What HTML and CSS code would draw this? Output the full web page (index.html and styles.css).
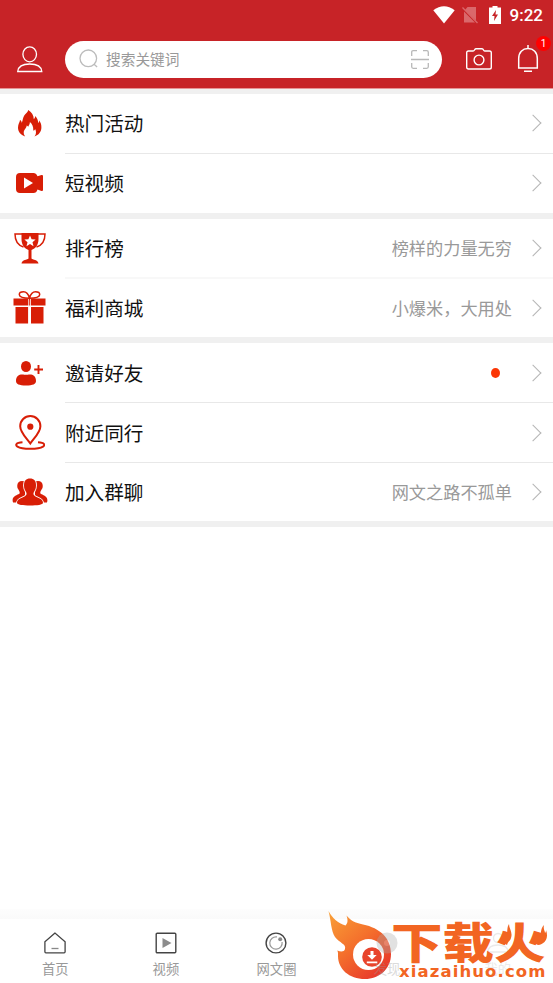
FILE: index.html
```html
<!DOCTYPE html>
<html lang="zh-CN">
<head>
<meta charset="utf-8">
<title>发现</title>
<link rel="stylesheet" href="styles.css">
</head>
<body>
<div class="app">
  <header class="header">
    <div class="status">
      <svg class="wifi" width="22" height="18" viewBox="0 0 22 18"><path d="M.3 4.200Q11-3.800 21.700 4.200L11 17.500z" fill="#fff"/></svg>
      <svg class="sim" width="16" height="18" viewBox="0 0 16 18"><path d="M5.500 1H14v13.500L3 4zM2 5.500 13 16.500H2z" fill="#da686b"/><path d="M.5 1.500 15.500 17" stroke="#da686b" stroke-width="1.300"/></svg>
      <svg class="battery" width="12" height="18" viewBox="0 0 12 18"><path d="M3.500 0h5v1.600H12V18H0V1.600h3.500z" fill="#fff"/><path d="M7 4 3 10h2.500L5 15l4-6.500H6.500z" fill="#c72327"/></svg>
      <span class="clock">9:22</span>
    </div>
    <div class="toolbar">
      <svg class="profile" width="26" height="27" viewBox="0 0 26 27" fill="none" stroke="#fff" stroke-width="1.300"><ellipse cx="12.700" cy="8.300" rx="6.800" ry="7.500"/><path d="M.7 25.500C1.200 21 5 18 12.700 18s11.700 3 12.100 7.500z"/></svg>
      <div class="search">
        <svg width="20" height="20" viewBox="0 0 20 20" fill="none" stroke="#bcbcbc" stroke-width="1.300"><circle cx="9.300" cy="9.300" r="8.300"/><path d="m14.800 15 3.300 3"/></svg>
        <span class="placeholder">搜索关键词</span>
        <svg width="18" height="19" viewBox="0 0 18 19" fill="none" stroke="#b8b8b8" stroke-width="1.300"><path d="M.7 6V2.200Q.7.700 2.200.7H6M12 .7h3.800q1.500 0 1.500 1.500V6M.7 13v3.800q0 1.500 1.500 1.500H6M12 18.300h3.800q1.500 0 1.500-1.500V13M0 9.500h18"/></svg>
      </div>
      <svg class="camera" width="26" height="22" viewBox="0 0 26 22" fill="none" stroke="#fff" stroke-width="1.400"><path d="M2.500 3H7q1 0 1.500-1T10 .8h6q1 0 1.500 1.200T19 3h4.500q1.800 0 1.800 1.800v14.400q0 1.800-1.800 1.800h-21Q.7 21 .7 19.200V4.800Q.7 3 2.500 3z"/><circle cx="13" cy="12" r="4.900"/></svg>
      <div class="notice">
        <svg width="22" height="28" viewBox="0 0 22 28" fill="none" stroke="#fff" stroke-width="1.500"><path d="M11 0v4M1.700 23V13.500C1.700 7.300 5.500 3.600 11 3.600s9.300 3.700 9.300 9.900V23zM7 26.300h8"/></svg>
        <span class="badge">1</span>
      </div>
    </div>
  </header>

  <main class="groups">
    <section class="group raised">
      <div class="row">
        <div class="icon"><svg width="24" height="27" viewBox="0 0 24 27"><path d="M7.200 26.500C2.500 25 0 21.500 0 17.500c0-3.300 1.800-5.200 2-7.500 1.200.8 1.700 1.700 1.800 2.900C5 9.800 4.600 8 6.400 5.300 7.700 3.300 10 2.500 10.200 0c3.300 2.200 5.500 5 5.600 9.200 1-.9 1.400-1.800 1.200-3.200 2.300 1.700 3 4.500 3.300 7 .8-.7 1-1.500.9-2.700 1.400 2.200 2.300 4.300 2.200 7 0 4.600-2.700 7.800-6.900 9.200 1.900-2.300 1.900-5.500.6-7.500-.3 1-1 1.500-1.800 1.600.2-4-1.200-6.800-3.400-8.600.1 2-.9 3-1.700 4.700-.5-.7-.8-1.100-1.500-1.300.2 2.200-2.500 3.700-2.900 6.100-.3 1.900.2 3.500 1.400 5z" fill="#d81e06"/></svg></div>
        <div class="body"><span class="label">热门活动</span><i class="arrow"></i></div>
      </div>
      <div class="row">
        <div class="icon"><svg width="28" height="20" viewBox="0 0 28 20"><path d="M4 0h13.500q2.500 0 4 3.300l4-1.300Q27 1.700 27 3v14q0 1.300-1.500 1l-4-1.500q-1 3.500-4 3.500H4q-4 0-4-4V4q0-4 4-4z" fill="#d81e06"/><path d="m8 4.500 9 5.500-9 5.500z" fill="#fff"/></svg></div>
        <div class="body"><span class="label">短视频</span><i class="arrow"></i></div>
      </div>
    </section>

    <section class="group compact">
      <div class="row">
        <div class="icon"><svg width="32" height="31" viewBox="0 0 32 31"><path d="M7.500 0h17v6c0 6-3 9.500-7 11v8.500c1 1.500 6.500 1 7 5h-17c.5-4 6-3.500 7-5V17c-4-1.500-7-5-7-11z" fill="#d81e06"/><path d="M8 1H1c0 7 3 11.300 8.500 13M24 1h7c0 7-3 11.300-8.500 13" fill="none" stroke="#d81e06" stroke-width="1.500"/><path d="m16 2.500 1.600 3.800 4 .3-3.100 2.600 1 4-3.500-2.200-3.500 2.200 1-4-3.100-2.600 4-.3z" fill="#fff"/></svg></div>
        <div class="body"><span class="label">排行榜</span><span class="hint">榜样的力量无穷</span><i class="arrow"></i></div>
      </div>
      <div class="row">
        <div class="icon"><svg width="33" height="33" viewBox="0 0 33 33"><path d="M.5 7.500h32v7h-32zM2.500 16H15.300v16.500H2.500zM18 16h12.500v16.500H18z" fill="#d81e06"/><path d="M15.300 7v26H18V7z" fill="#fff"/><path d="M16.200 7.500h1v7h-1z" fill="#d81e06"/><path d="M16.500 7.200C12.500 7.200 6.300 6.500 6.300 3.500 6.300 1.700 8.200.8 10.500.8c3 0 5 2.700 6 6.200 1-3.500 3-6.200 6-6.200 2.300 0 4.200.9 4.200 2.700 0 3-6.200 3.700-10.200 3.700z" fill="#fff" stroke="#d81e06" stroke-width="1.500"/></svg></div>
        <div class="body"><span class="label">福利商城</span><span class="hint">小爆米，大用处</span><i class="arrow"></i></div>
      </div>
    </section>

    <section class="group">
      <div class="row">
        <div class="icon"><svg width="28" height="25" viewBox="0 0 28 25"><ellipse cx="10" cy="5.500" rx="5" ry="5.500" fill="#d81e06"/><path d="M0 20c0-5 3-6.500 6-6.500 2 0 2.500.3 4 .3s2-.3 4-.3c3 0 6 1.500 6 6.500 0 3-3 4.500-10 4.500S0 23 0 20z" fill="#d81e06"/><path d="M22.500 4v9M18.200 8.500h8.800" stroke="#d81e06" stroke-width="1.900"/></svg></div>
        <div class="body"><span class="label">邀请好友</span><i class="dot"></i><i class="arrow"></i></div>
      </div>
      <div class="row">
        <div class="icon"><svg width="30" height="35" viewBox="0 0 30 35" fill="none" stroke="#d81e06" stroke-width="2"><path d="M15.300 28.500C11.500 23 5.200 17.500 5.200 11.200A10.100 10.200 0 0 1 25.400 11.200C25.400 17.500 19 23 15.300 28.500z"/><circle cx="15.300" cy="11.700" r="3.100" fill="#d81e06" stroke="none"/><path d="M7.500 27.300c-7 .4-7.300 2.800-5 4.300 4.500 2.900 21 2.900 25.500 0 2.300-1.500 2-3.900-5-4.300"/></svg></div>
        <div class="body"><span class="label">附近同行</span><i class="arrow"></i></div>
      </div>
      <div class="row last">
        <div class="icon"><svg width="36" height="28" viewBox="0 0 36 28" fill="#d81e06"><path d="M5.500 10C4.500 5.500 6.500 3 10 3s5.500 2.500 4.500 7c-.5 2-1.500 3.300-1.500 5v4L7 24.500H1c-1.500-5 1.500-6.500 6-8.500 1.500-.7.500-3-1.500-6zM30.500 10C31.500 5.500 29.500 3 26 3s-5.500 2.500-4.500 7c.5 2 1.500 3.300 1.500 5v4l6 5.500h6c1.500-5-1.500-6.500-6-8.500-1.500-.7-.5-3 1.500-6z"/><path d="M12 7.500C12 2.500 14 .5 18 .5s6 2 6 7c0 3.500-1 4.500-2.300 7-1 2 .3 3.300 3.300 4.700 3 1.300 6 2.300 6 5.800 0 1.700-6 2.500-13 2.500S5 26.700 5 25c0-3.500 3-4.500 6-5.800 3-1.400 4.300-2.700 3.300-4.700-1.300-2.500-2.300-3.500-2.300-7z" stroke="#fff" stroke-width="1.800" paint-order="stroke"/></svg></div>
        <div class="body"><span class="label">加入群聊</span><span class="hint">网文之路不孤单</span><i class="arrow"></i></div>
      </div>
    </section>
  </main>

  <div class="shade"></div>
  <nav class="tabs">
    <div class="tab">
      <svg width="22" height="22" viewBox="0 0 22 22" fill="none" stroke="#444" stroke-width="1.300"><path d="M11 1 .9 9.800v10q0 1 1 1h18.200q1 0 1-1v-10z"/><path d="M7.500 16.500h7" stroke="#888"/></svg>
      <span>首页</span>
    </div>
    <div class="tab">
      <svg width="22" height="22" viewBox="0 0 22 22"><rect x="1.200" y="1.200" width="19.600" height="19.600" rx="1" fill="none" stroke="#444" stroke-width="1.400"/><path d="m7.500 6 9 5-9 5z" fill="#8c8c8c"/></svg>
      <span>视频</span>
    </div>
    <div class="tab">
      <svg width="22" height="22" viewBox="0 0 22 22" fill="none"><circle cx="11" cy="11" r="9.900" stroke="#444" stroke-width="1.400"/><path d="M12 4.900A6.200 6.200 0 1 0 17.100 10" stroke="#999" stroke-width="1.200"/><circle cx="15.200" cy="7.200" r="2" fill="#888"/></svg>
      <span>网文圈</span>
    </div>
    <div class="tab faded">
      <svg width="22" height="22" viewBox="0 0 22 22"><circle cx="11" cy="11" r="10.500" fill="#aaa"/><circle cx="11" cy="11" r="3" fill="#ddd"/></svg>
      <span>发现</span>
    </div>
    <div class="tab faded mine">
      <svg width="22" height="22" viewBox="0 0 22 22" fill="none" stroke="#999" stroke-width="1.300"><circle cx="11" cy="6" r="4.500"/><path d="M1 20q0-7 10-7t10 7z"/></svg>
      <span>我的</span>
    </div>
  </nav>

  <div class="watermark">
    <svg class="flame" width="65" height="70" viewBox="0 0 65 70">
      <defs><linearGradient id="fire" x1="0" y1="0" x2=".8" y2="1"><stop offset="0" stop-color="#f9a137"/><stop offset=".5" stop-color="#f4702c"/><stop offset="1" stop-color="#e7352b"/></linearGradient></defs>
      <path d="M.5 0C4 7 10 12 17.500 14.500 20 12 20 9 18.500 4.500 22 9 27 12 35 13.500 52 17 63 27 63 43 63 58 51 68 37 68 21 68 10 58 10 45c0-2 .3-3.500-.7-5.500C13 41 16 41 17 38c1.500-5-5.500-6-10-12C3 20 3 9 .5 0z" fill="url(#fire)"/>
      <circle cx="40.500" cy="43.500" r="15.500" fill="#fff"/><circle cx="44" cy="46" r="9.800" fill="#e8442c"/>
      <path d="M42.500 40h3v4h3.200L44 48.800 39.300 44h3.200zM38.800 50.500h10.500v1.800H38.800z" fill="#fff"/>
    </svg>
    <div class="wordmark">
      <span class="brand">下载火</span>
      <span class="site">xiazaihuo.com</span>
    </div>
    <svg class="sparks" width="46" height="28" viewBox="0 0 46 28" fill="#f26522"><path d="M5 23C-1 20 0 14 3 9c.5 2 1 3 2 4 .5-5 0-8 2-11 0 5 4 8 2 14-.7 3-3 3-4 7zM36 23c-7-3-4-8 0-11-.3 2 0 3 1 3 3-4 1-8 5-12-1 4 1 6 1 8 1-1 1-2 1-3 3 8-1 14-8 15z"/></svg>
  </div>
</div>
</body>
</html>
```
FILE: styles.css
```css
* { box-sizing: border-box; }
body {
  margin: 0;
  background: #fff;
  font-family: "Noto Sans CJK SC", sans-serif;
}
svg { display: block; flex: none; }
.app {
  position: relative;
  width: 553px;
  height: 983px;
  display: flex;
  flex-direction: column;
  overflow: hidden;
}
.header { height: 88px; background: #c72327; flex: none; }
.status {
  height: 30px;
  padding: 0 10px 0 0;
  display: flex;
  align-items: center;
  justify-content: flex-end;
}
.sim { margin-left: 7px; }
.battery { margin-left: 11px; }
.clock {
  margin-left: 9px;
  font: 500 17px/30px Roboto, sans-serif;
  color: #fff;
}
.toolbar {
  height: 58px;
  padding-left: 17px;
  display: flex;
  align-items: center;
}
.profile { margin-right: 22px; }
.search {
  width: 377px;
  height: 37px;
  border-radius: 19px;
  padding: 0 13px 0 14px;
  background: #fff;
  display: flex;
  align-items: center;
}
.placeholder {
  flex: 1;
  margin-left: 7px;
  font-size: 14.7px;
  line-height: 20px;
  color: #999;
}
.camera { margin-left: 24px; }
.notice { position: relative; margin-left: 25px; }
.badge {
  position: absolute;
  left: 19px;
  top: -9px;
  width: 15px;
  height: 15px;
  border-radius: 50%;
  background: #f00;
  color: #fff;
  font: 10px/15px Roboto, sans-serif;
  text-align: center;
}
.groups {
  flex: none;
  padding: 5px 0 6px;
  display: flex;
  flex-direction: column;
  gap: 6px;
  background: #f0f0f0;
  border-top: 1px solid #e69496;
}
.group { background: #fff; }
.row { height: 59px; display: flex; }
.row + .row { height: 60px; }
.compact .row { height: 58px; }
.compact .row + .row { height: 60px; }
.group .row.last { height: 59px; }
.icon {
  width: 65px;
  padding-right: 6px;
  display: flex;
  align-items: center;
  justify-content: center;
}
.compact .icon { padding-top: 1px; }
.row:first-child .icon { padding-top: 1px; }
.raised .row:first-child .icon { padding: 0 6px 1px 0; }
.body {
  flex: 1;
  display: flex;
  align-items: center;
  padding-right: 14px;
}
.raised .body { padding-bottom: 2px; }
.row + .row .body { border-top: 1px solid #e8e8e8; }
.compact .row + .row .body { border-top: 2px solid #f8f8f8; padding-bottom: 1px; }
.label {
  flex: 1;
  font-size: 19.6px;
  line-height: 30px;
  color: #111;
}
.hint {
  font-size: 17.2px;
  line-height: 26px;
  color: #999;
}
.arrow {
  width: 12px;
  height: 12px;
  margin-left: 15px;
  border: solid #b5b5b5;
  border-width: 1px 1px 0 0;
  transform: rotate(45deg);
}
.dot {
  width: 9px;
  height: 10px;
  margin-right: 12px;
  border-radius: 50%;
  background: #fb3605;
}
.shade {
  height: 10px;
  margin-top: auto;
  background: linear-gradient(#fdfdfd, #fafafa);
}
.tabs {
  height: 64px;
  padding-top: 13px;
  display: grid;
  grid-template-columns: repeat(5, 1fr);
}
.tab {
  display: flex;
  flex-direction: column;
  align-items: center;
  gap: 5px;
  font-size: 13.3px;
  line-height: 20px;
  color: #999;
}
.faded { position: relative; z-index: 1; opacity: .35; }
.mine { z-index: auto; opacity: .2; }
.watermark {
  position: absolute;
  left: 328px;
  top: 911px;
  width: 225px;
  height: 72px;
  display: flex;
}
.wordmark {
  display: flex;
  flex-direction: column;
  white-space: nowrap;
  color: #f26522;
}
.brand {
  margin-left: -2px;
  height: 52px;
  font-size: 51.5px;
  font-weight: 900;
  line-height: 52px;
  transform: translateY(4px) scaleY(.83);
}
.site {
  margin-left: 6px;
  font: bold 16.5px/18px "DejaVu Sans", sans-serif;
  letter-spacing: 1.1px;
}
.sparks { position: absolute; left: 174px; top: 11px; }
```
